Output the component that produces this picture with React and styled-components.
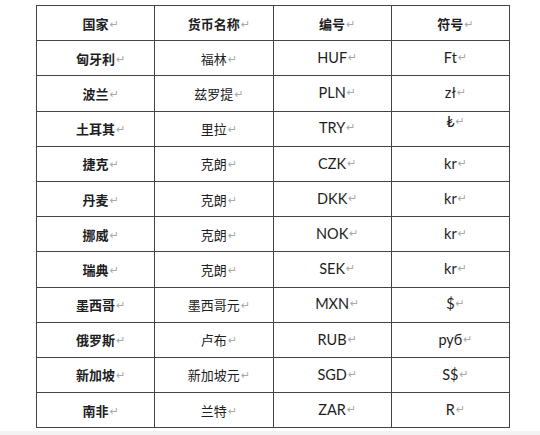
import styled, { createGlobalStyle } from "styled-components";

const GlobalStyle = createGlobalStyle`
    html, body {
        margin: 0;
        padding: 0;
        background: #ffffff;
    }
    body {
        font-family: "Lato", "Noto Sans CJK SC", sans-serif;
        color: #1e1e1e;
    }
`;

const Page = styled.div`
    width: 540px;
    height: 435px;
    box-sizing: border-box;
    padding: 5px 0 0 36px;
    background: linear-gradient(to bottom, #ffffff 0, #ffffff 431px, #f3f3f3 431px);
    overflow: hidden;
`;

const Table = styled.table`
    width: 474px;
    border-collapse: collapse;
    table-layout: fixed;
`;

const Cell = styled.td`
    height: 35.2px;
    padding: 0;
    box-sizing: border-box;
    border: 1.5px solid #444444;
    text-align: center;
    vertical-align: ${(props) => (props.top ? "top" : "middle")};
    padding-top: ${(props) => (props.top ? "3px" : "0")};
    font-family: ${(props) => (props.latin ? '"Lato", "Noto Sans CJK SC", sans-serif' : '"Noto Sans CJK SC", sans-serif')};
    font-size: ${(props) => (props.latin ? "14.5px" : "13px")};
    font-weight: ${(props) => (props.bold ? 700 : 400)};
    line-height: 1;
`;

const Mark = styled.span`
    position: relative;

    &::after {
        content: "↵";
        position: absolute;
        left: 100%;
        bottom: 3px;
        margin-left: 1px;
        font-family: "DejaVu Sans", sans-serif;
        font-size: 11px;
        font-weight: 400;
        line-height: 1;
        color: #a8a8a8;
    }
`;

const rows = [
    ["匈牙利", "福林", "HUF", "Ft"],
    ["波兰", "兹罗提", "PLN", "zł"],
    ["土耳其", "里拉", "TRY", "₺"],
    ["捷克", "克朗", "CZK", "kr"],
    ["丹麦", "克朗", "DKK", "kr"],
    ["挪威", "克朗", "NOK", "kr"],
    ["瑞典", "克朗", "SEK", "kr"],
    ["墨西哥", "墨西哥元", "MXN", "$"],
    ["俄罗斯", "卢布", "RUB", "руб"],
    ["新加坡", "新加坡元", "SGD", "S$"],
    ["南非", "兰特", "ZAR", "R"],
];

export default function App() {
    return (
        <>
            <GlobalStyle />
            <Page>
                <Table>
                    <thead>
                        <tr>
                            {["国家", "货币名称", "编号", "符号"].map((title) => (
                                <Cell as="th" key={title} bold>
                                    <Mark>{title}</Mark>
                                </Cell>
                            ))}
                        </tr>
                    </thead>
                    <tbody>
                        {rows.map(([country, name, code, symbol]) => (
                            <tr key={code}>
                                <Cell bold><Mark>{country}</Mark></Cell>
                                <Cell><Mark>{name}</Mark></Cell>
                                <Cell latin><Mark>{code}</Mark></Cell>
                                <Cell latin top={symbol === "₺"}>
                                    <Mark>{symbol}</Mark>
                                </Cell>
                            </tr>
                        ))}
                    </tbody>
                </Table>
            </Page>
        </>
    );
}
